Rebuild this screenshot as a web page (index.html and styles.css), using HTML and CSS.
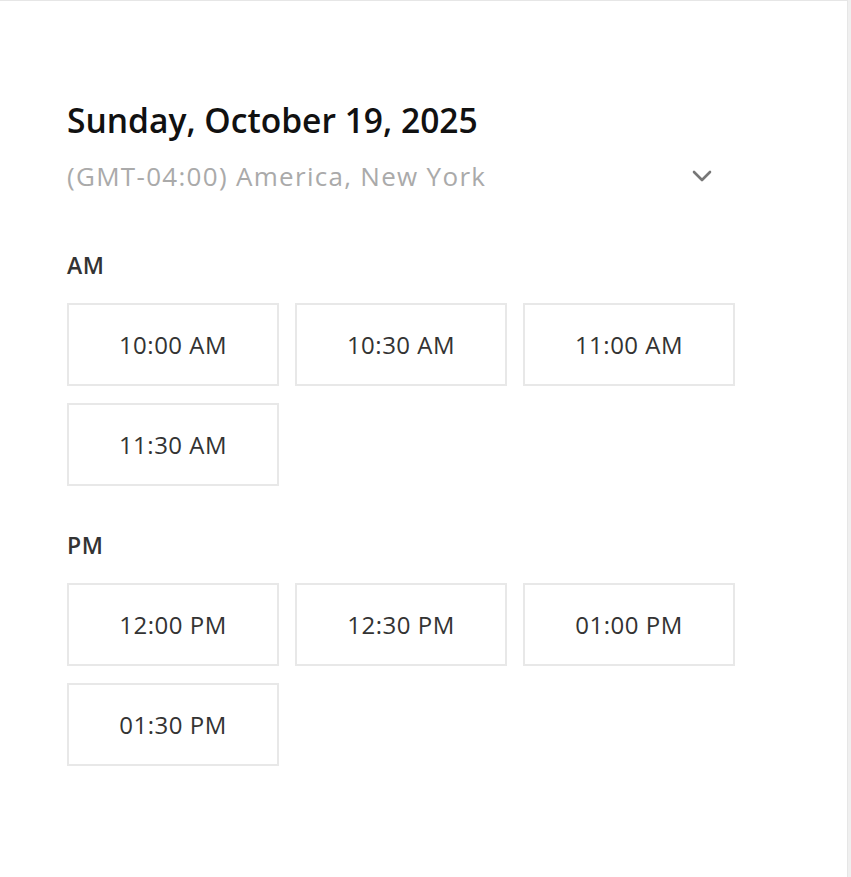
FILE: index.html
```html
<!DOCTYPE html>
<html lang="en">
<head>
    <meta charset="UTF-8">
    <meta name="viewport" content="width=device-width, initial-scale=1.0">
    <title>Pick a time</title>
    <link rel="stylesheet" href="styles.css">
</head>
<body>
    <div class="panel">
        <h1 class="date">Sunday, October 19, 2025</h1>
        <div class="timezone">
            <span>(GMT-04:00) America, New York</span>
            <svg class="chevron" width="20" height="12" viewBox="0 0 20 12">
                <path d="M2 2 L10 10 L18 2" fill="none" stroke="#777" stroke-width="2.6" stroke-linecap="round" stroke-linejoin="round"/>
            </svg>
        </div>

        <div class="label">AM</div>
        <div class="slots">
            <button class="slot">10:00 AM</button>
            <button class="slot">10:30 AM</button>
            <button class="slot">11:00 AM</button>
            <button class="slot">11:30 AM</button>
        </div>

        <div class="label pm">PM</div>
        <div class="slots">
            <button class="slot">12:00 PM</button>
            <button class="slot">12:30 PM</button>
            <button class="slot">01:00 PM</button>
            <button class="slot">01:30 PM</button>
        </div>
    </div>
</body>
</html>
```
FILE: styles.css
```css
body {
    margin: 0;
    background-color: #efefef;
    font-family: "Open Sans", Lato, sans-serif;
}
.panel {
    box-sizing: border-box;
    width: 848px;
    min-height: 877px;
    background-color: #fff;
    border-top: 1px solid #e6e6e6;
    border-right: 1px solid #e6e6e6;
    padding: 99px 0 0 67px;
}
.date {
    margin: 0;
    font-size: 33.6px;
    line-height: 40px;
    font-weight: 600;
    color: #111;
}
.timezone {
    width: 667px;
    margin-top: 18px;
    display: flex;
    justify-content: space-between;
    align-items: center;
    font-size: 26px;
    line-height: 36px;
    letter-spacing: 1.3px;
    color: #aaa;
}
.chevron {
    margin-right: 22px;
}
.label {
    margin-top: 57px;
    font-size: 23px;
    line-height: 28px;
    font-weight: 600;
    letter-spacing: 0.5px;
    color: #333;
}
.label.pm {
    margin-top: 45px;
}
.slots {
    margin-top: 24px;
    display: grid;
    grid-template-columns: repeat(3, 212px);
    grid-auto-rows: 83px;
    column-gap: 16px;
    row-gap: 17px;
}
.slot {
    background-color: #fff;
    border: 2px solid #e8e8e8;
    font-family: inherit;
    font-size: 24px;
    letter-spacing: 0.5px;
    color: #333;
    cursor: pointer;
}
```
